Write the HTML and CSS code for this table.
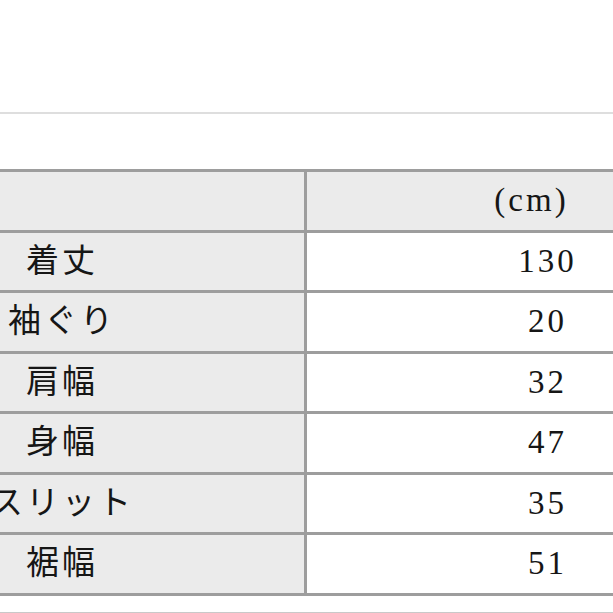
FILE: index.html
```html
<!DOCTYPE html>
<html lang="ja">
<head>
<meta charset="utf-8">
<title>サイズ表</title>
<link rel="stylesheet" href="styles.css">
</head>
<body>
<div class="topbar"></div>
<div class="wrap">
  <div class="size-table">
    <div class="cell label head"></div>
    <div class="cell value head unit">(cm)</div>
    <div class="cell label">着丈</div>
    <div class="cell value">130</div>
    <div class="cell label">袖ぐり</div>
    <div class="cell value">20</div>
    <div class="cell label">肩幅</div>
    <div class="cell value">32</div>
    <div class="cell label">身幅</div>
    <div class="cell value">47</div>
    <div class="cell label">スリット</div>
    <div class="cell value">35</div>
    <div class="cell label">裾幅</div>
    <div class="cell value">51</div>
  </div>
  <div class="bottomline"></div>
</div>
</body>
</html>
```
FILE: styles.css
```css
html, body {
  margin: 0;
  padding: 0;
  overflow: hidden;
  background: #ffffff;
}
body {
  width: 613px;
  height: 613px;
  font-family: "Liberation Serif", "Noto Sans CJK JP", serif;
  color: #161616;
}
.topbar {
  height: 112px;
  border-bottom: 2px solid #dedede;
}
.wrap {
  padding-top: 55px;
}
.size-table {
  display: grid;
  grid-template-columns: 487px 478px;
  grid-auto-rows: 57.5px;
  gap: 3px;
  padding: 3px;
  background: #9d9d9d;
  margin-left: -186px;
  width: max-content;
}
.cell {
  display: flex;
  align-items: center;
  justify-content: center;
  font-size: 33px;
  letter-spacing: 3px;
  line-height: 1;
}
.label {
  background: #ebebeb;
  padding-left: 3px;
}
.value {
  background: #ffffff;
  padding-left: 3px;
}
.head {
  background: #ebebeb;
}
.unit {
  padding-right: 32px;
}
.bottomline {
  margin-top: 16px;
  height: 2px;
  background: #c9c9c9;
}
```
